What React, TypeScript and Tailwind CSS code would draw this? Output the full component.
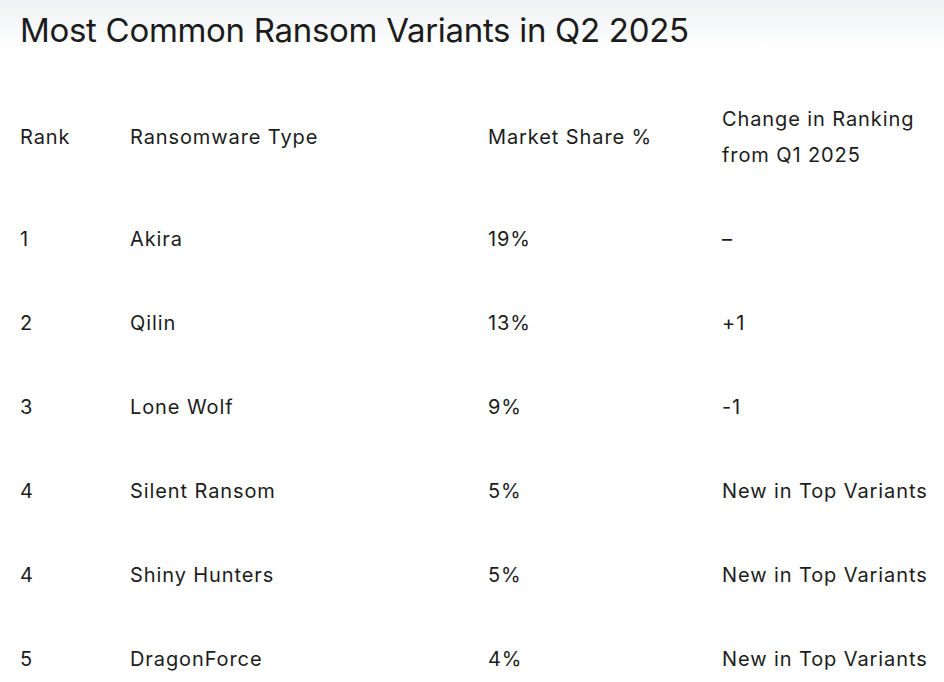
import React from 'react';

const rows = [
  { rank: '1', type: 'Akira', share: '19%', change: '–' },
  { rank: '2', type: 'Qilin', share: '13%', change: '+1' },
  { rank: '3', type: 'Lone Wolf', share: '9%', change: '-1' },
  { rank: '4', type: 'Silent Ransom', share: '5%', change: 'New in Top Variants' },
  { rank: '4', type: 'Shiny Hunters', share: '5%', change: 'New in Top Variants' },
  { rank: '5', type: 'DragonForce', share: '4%', change: 'New in Top Variants' },
];

const cell = 'py-6 leading-[36px]';

const App: React.FC = () => {
  return (
    <div
      className="min-h-[682px] w-[944px] overflow-hidden bg-gradient-to-b from-[#eef1f3] via-white via-[7%] to-white text-[#1c1c1c]"
      style={{ fontFamily: 'Inter, "Noto Sans", sans-serif' }}
    >
      {/* Titulo */}
      <h1 className="pl-5 pt-[10px] text-[33px] leading-[40px] tracking-[-0.3px]">
        Most Common Ransom Variants in Q2 2025
      </h1>

      {/* Tabla */}
      <div className="mt-[27px] grid grid-cols-[110px_358px_234px_1fr] pl-5 text-[20px] tracking-[0.9px]">
        <div className={`${cell} self-center`}>Rank</div>
        <div className={`${cell} self-center`}>Ransomware Type</div>
        <div className={`${cell} self-center`}>Market Share %</div>
        <div className={`${cell} pr-2`}>Change in Ranking from Q1 2025</div>

        {rows.map((r, i) => (
          <React.Fragment key={i}>
            <div className={cell}>{r.rank}</div>
            <div className={cell}>{r.type}</div>
            <div className={cell}>{r.share}</div>
            <div className={`${cell} whitespace-nowrap`}>{r.change}</div>
          </React.Fragment>
        ))}
      </div>
    </div>
  );
};

export default App;
